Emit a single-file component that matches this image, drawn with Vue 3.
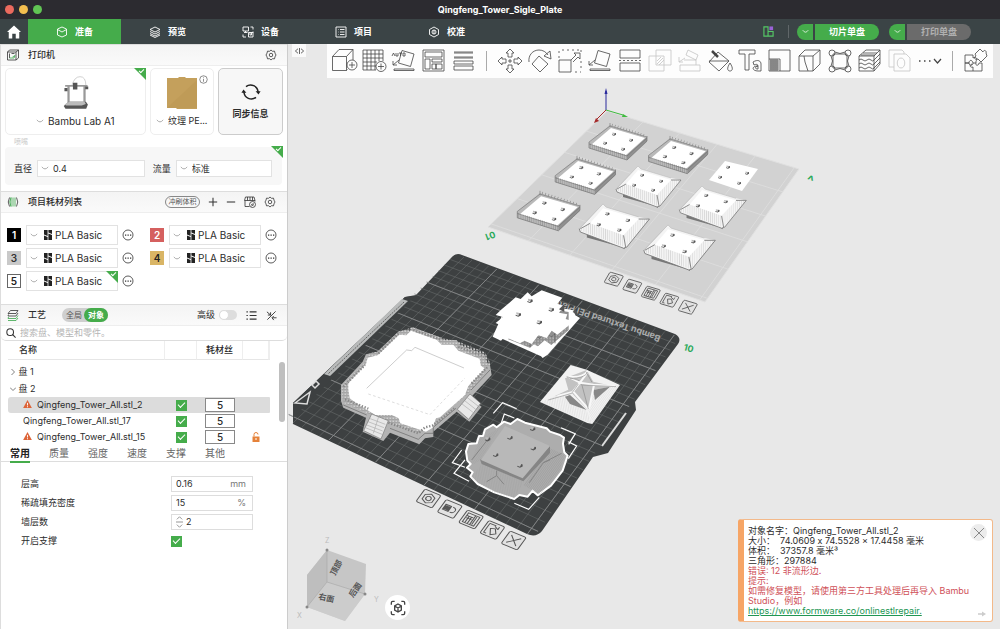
<script setup>
import { ref } from 'vue'

const circle = (x, y, r) => `M${x - r} ${y}a${r} ${r} 0 1 0 ${2 * r} 0a${r} ${r} 0 1 0 ${-2 * r} 0`

const gear = 'M12 2l3 2.6 4-.3 1 4L22 12l-2 3.700-1 4-4-.3-3 2.600-3-2.600-4 .3-1-4L2 12l2-3.700 1-4 4 .3z' + circle(12, 12, 3.5)

const navTabs = [
  { label: '准备', d: 'M12 2l9 4v12l-9 4-9-4V6zM3 7l9 5 9-5' },
  { label: '预览', d: 'M12 2l10 5-10 5L2 7zM2 11l10 5 10-5M2 15l10 5 10-5M2 18l10 5 10-5' },
  { label: '设备', d: 'M2 2h11v8H2zM7 10v3M4 13h7M17 2h5v5M22 11v3M2 17v5h6M13 13h9v9h-9zM16 13v5h3v-5' },
  { label: '项目', d: 'M2 2h20v20H2zM6 7h1M10 7h9M6 12h1M10 12h9M6 17h1M10 17h9' },
  { label: '校准', d: 'M12 2l9 5v10l-9 5-9-5V7z' + circle(12, 12, 4) + 'M12 8v8' },
]
const activeTab = ref(0)

const bed = 'M10 1.500L22 5l-3.500 12.500L6.500 14z'
const tools1 = [
  { label: '添加', d: 'M.5 7.500h14v14H.5zM.5 7.500L7 .5h14l-6.500 7M21 .5V11M14.500 21.500l1-1' + circle(20, 16, 5), plus: 'M17 16h6M20 13v6' },
  { label: '添加盘', d: 'M21 12V1H1v20h13M5 1v20M9 1v20M13 1v20M17 1v11M1 5h20M1 9h20M1 13h14M1 17h13' + circle(19, 17.500, 5), plus: 'M16 17.500h6M19 14.500v6' },
  { label: '自动朝向', d: bed + 'M2 20h20v1.500H2zM7 11l-6 5M1 12v4h4M0 7l1.500-3L3 7M4 4v3h2V4M7 4h3M8.500 4v3M11 4h2v3h-2z' },
  { label: '自动摆放', d: 'M1 1h21v21H1zM3 3h17v5H3zM3 10h5v10H3zM10 10h10v3H10zM10 15h4v5h-4zM14 15h6v5h-6z' },
  { label: '排列选项', d: 'M2 3h19M2 4h19M2 8h19M2 9h19M2 12h19v3H2zM2 17h19v4H2z' },
]
const tools2 = [
  { label: '移动', d: 'M12 0l4 4h-2v4h-4V4H8zM12 24l4-4h-2v-4h-4v4H8zM0 12l4-4v2h4v4H4v2zM24 12l-4-4v2h-4v4h4v2zM11 11h2v2h-2z' },
  { label: '旋转', d: 'M11 7l9 8-8 8-8-8zM1 13C0 6 5 1 11 1c4 0 7 2 9 5M22 2l1 8-7-3z' },
  { label: '缩放', d: 'M1 11h12v12H1zM13 11l5-5-2-2h6v6l-2-2-5 5M1 9V7M1 4V2M4 1h2M9 1h2M14 1h2M19 1h2M23 1v2M23 12v2M23 17v2M17 23h2M22 23h1' },
  { label: '选择底面', d: bed + 'M2 20h20v1.500H2zM7 11l-6 5M1 12v4h4' },
  { label: '切割', d: 'M2 1h20v8H2zM2 14h20v8H2zM1 11.500h2M5 11.500h2M9 11.500h2M13 11.500h2M17 11.500h2M21 11.500h2' },
  { label: '网格布尔', d: 'M1 7h15v15H1zM8 1h15v15H8zM9 15l6-6M9 12l4-4M11 16l5-5', faded: true },
  { label: '支撑绘制', d: 'M2 16h20v6H2zM6 11h12v5M10 1l10 5-2 5-10-5zM7 9l-6 4M1 8v5h4', faded: true },
  { label: '上色', d: 'M10 3l11 9-10 10L1 13zM1 12h20M22 14c4 6 2 8 0 8s-4-2 0-8z', bold: 'M4 2l6 6' },
  { label: '文字', d: 'M1 1h16v4h-6v16H7V5H1zM15 13c5-3 8-1 8 2v7h-3c-6 0-7-5 0-5 0-2-2-2-4-1zM20 17v3h-1c-2 0-2-3 1-3z' },
  { label: '测量', d: 'M1 1h21v21h-10V10H1zM1 10v12h11M2 12h9M2 14h9M2 16h9M2 18h9M2 20h9M3 10v12M5 10v12M7 10v12M9 10v12' },
  { label: '接缝', d: 'M1 7h14v15H1zM1 7l6-6h15l-7 6M22 1v14l-7 7M6 7l1 6 3 9' },
  { label: '变形', d: 'M5 5h14v14H5zM7 3Q12 6 17 3M7 21q5-3 10 0M3 7q3 5 0 10M21 7q-3 5 0 10' + circle(4, 4, 3) + circle(20, 4, 3) + circle(4, 20, 3) + circle(20, 20, 3) },
  { label: '可变层高', d: 'M1 7h15v15H1zM1 7l7-6h14l-6 6M22 1v14l-6 7M1 11q2-2 4 0t4 0 4 0 3 0l6-6M1 15q2-2 4 0t4 0 4 0 3 0l6-6M1 19q2-2 4 0t4 0 4 0 3 0l6-6M3 6h14M5 4h14' },
  { label: '浮雕', d: 'M1 1h13l2 2v2M1 1v17h5M6 5h12l4 4v13H6zM13 9c5 0 5 10 0 10s-5-10 0-10', faded: true },
]
const puzzle = 'M1 6h8v3c3-2 5 1 3 3v2h-3c-1-4-4-3-4 0H1zM1 14h4c0 3 4 3 4 0M1 14v8h8v-4c-3 1-4-2-1-3M9 22h9v-8h-3c0 3-4 3-3 0M11 5l5-5 3 3c1-3 4-1 3 1l1 3-6 6-3-3c-3 1-5-1-2-3z'

const filaments = [
  { n: 1, bg: '#000', fg: '#fff' },
  { n: 2, bg: '#d5605f', fg: '#fff' },
  { n: 3, bg: '#c9c9c9', fg: '#333' },
  { n: 4, bg: '#d9b565', fg: '#222' },
  { n: 5, bg: '#fff', fg: '#222', ring: true, checked: true },
]
const objects = [
  { name: 'Qingfeng_Tower_All.stl_2', warn: true, selected: true },
  { name: 'Qingfeng_Tower_All.stl_17' },
  { name: 'Qingfeng_Tower_All.stl_15', warn: true, lock: true },
]
const paramTabs = ['常用', '质量', '强度', '速度', '支撑', '其他']

// Projects plate millimetres onto the four screen corners of a plate.
function projector([a, b, c, d]) {
  const dx1 = b[0] - c[0], dx2 = d[0] - c[0], sx = a[0] - b[0] + c[0] - d[0]
  const dy1 = b[1] - c[1], dy2 = d[1] - c[1], sy = a[1] - b[1] + c[1] - d[1]
  const det = dx1 * dy2 - dx2 * dy1
  const g = (sx * dy2 - dx2 * sy) / det
  const h = (dx1 * sy - sx * dy1) / det
  return (u, v) => {
    const w = g * u + h * v + 1
    const x = ((b[0] - a[0] + g * b[0]) * u + (d[0] - a[0] + h * d[0]) * v + a[0]) / w
    const y = ((b[1] - a[1] + g * b[1]) * u + (d[1] - a[1] + h * d[1]) * v + a[1]) / w
    return `${x.toFixed(1)} ${y.toFixed(1)}`
  }
}
function grid(corners, step) {
  const p = projector(corners)
  let d = ''
  for (let mm = step; mm < 256; mm += step) {
    const t = mm / 256
    d += `M${p(t, 0)}L${p(t, 1)}M${p(0, t)}L${p(1, t)}`
  }
  return d
}
const darkPlate = [[456, 254], [680, 337], [534, 537], [284, 419]]
const lightPlate = [[607, 111], [799, 169], [705, 302], [488, 227]]
const darkFine = grid(darkPlate, 10)
const darkBold = grid(darkPlate, 50)
const lightBold = grid(lightPlate, 50)

const trays = [[0, 0, 1], [60, 13, 1.02], [-33, 33, 1.04], [-70, 68, 1.08]]
const roofs = [[0, 0, 1], [64, 20, 1.03], [-35, 38, 1.08], [30, 59, 1.1]]
const plateIcons = [
  'M10 3l6 3.500v7L10 17l-6-3.500v-7z' + circle(10, 10, 3),
  'M3 6h7v8H3zM4 7v6M5 7v6M6 7v6M7 7v6M8 7v6M9 7v6M12 6c6 0 6 8 0 8',
  'M3 3h14v14H3zM3 7h8M6 7v10M9 7v10M12 3v14M14 4v12M4 10h7',
  'M3 3h8M3 3v14h3M7 9l5-2 4 6-5 4zM10 4l5 3M15 3v4',
  'M4 4l12 12M16 4L4 16',
]
</script>

<template>
  <div class="app">
    <header class="titlebar">
      <div class="lights"><i class="red"></i><i class="yellow"></i><i class="green"></i></div>
      <h1>Qingfeng_Tower_Sigle_Plate</h1>
    </header>

    <nav class="nav">
      <button class="home" aria-label="主页">
        <svg viewBox="0 0 24 24" width="14" height="14"><path fill="#fff" d="M12 1l12 11h-3v11h-6v-8H9v8H3V12H0z" /></svg>
      </button>
      <button v-for="(t, i) in navTabs" :key="t.label" class="tab" :class="{ active: i === activeTab }" @click="activeTab = i">
        <svg viewBox="0 0 24 24" width="12" height="12" class="line"><path :d="t.d" stroke-width="1.8" /></svg>
        <span>{{ t.label }}</span>
      </button>
      <div class="nav-right">
        <svg viewBox="0 0 24 24" width="11" height="11" fill="none" stroke-width="2.500"><path stroke="#55c866" d="M2 2h9v20H2zM11 12h11v10H11z" /><path fill="#9a62d8" d="M14 1h8v8h-8z" /></svg>
        <i class="sep"></i>
        <div class="split">
          <button aria-label="切片选项"><svg viewBox="0 0 10 6" width="7" height="5"><path d="M1 1q4 6 8 0" fill="none" stroke="#fff" /></svg></button>
          <button class="main">切片单盘</button>
        </div>
        <div class="split">
          <button aria-label="打印选项"><svg viewBox="0 0 10 6" width="7" height="5"><path d="M1 1q4 6 8 0" fill="none" stroke="#fff" /></svg></button>
          <button class="main off">打印单盘</button>
        </div>
      </div>
    </nav>

    <div class="body">
      <aside class="side">
        <section class="head">
          <svg viewBox="0 0 24 24" width="12" height="12" class="hicon"><path d="M1 6h17v16H1zM1 6l4-4h18v16l-5 4M18 6l5-4M5 9v9M9 9h6" /><path stroke="#3aa64a" d="M5 18h9l2-5-5 3" /></svg>
          <h2>打印机</h2>
          <span class="grow"></span>
          <button aria-label="打印机设置"><svg viewBox="0 0 24 24" width="12" height="12" class="hicon"><path :d="gear" /></svg></button>
        </section>

        <div class="cards">
          <div class="card wide">
            <i class="corner"></i>
            <svg viewBox="0 0 78 100" width="28" height="34" fill="none">
              <path stroke="#bbb" stroke-width="2" d="M27 28Q34 2 51 2T68 28" />
              <path stroke="#888" stroke-width="6" d="M17 28v58M64 28v55" />
              <path stroke="#bcbcbc" stroke-width="3" d="M19 28v58M66 28v55" />
              <path stroke="#999" stroke-width="5" d="M7 29h66" />
              <path fill="#555" d="M30 20h13v20H30zM5 35h9v10H5zM66 31h9v8h-9z" />
              <path fill="#555" d="M3 88l15-12h50l6 8-5 12H8z" />
              <path fill="#bbb" d="M5 84l15-9h44l4 7-12 5H10z" />
            </svg>
            <label class="pick"><svg viewBox="0 0 10 6" width="8" height="5"><path d="M1 1q4 5 8 0" /></svg><select aria-label="打印机型号"><option>Bambu Lab A1</option></select></label>
          </div>
          <div class="card plate">
            <svg viewBox="0 0 30 33" width="30" height="33"><path fill="#c4a05c" d="M0 1h11l1-1h6l1 1h11v31H10l-1-1H0z" /><path fill="#b8944f" d="M0 31L30 3v28z" opacity=".4" /></svg>
            <svg class="info" viewBox="0 0 24 24" width="9" height="9"><circle cx="12" cy="12" r="10" /><path d="M12 10v8M12 5v2" /></svg>
            <label class="pick"><svg viewBox="0 0 10 6" width="8" height="5"><path d="M1 1q4 5 8 0" /></svg><select aria-label="打印板类型"><option>纹理 PE...</option></select></label>
          </div>
          <button class="card sync">
            <svg viewBox="0 0 24 24" width="20" height="20" fill="none" stroke="#222" stroke-width="1.800"><path d="M6 5.500A9 9 0 0 1 20.500 12M18 18.500A9 9 0 0 1 3.500 12" /><path fill="#222" stroke="none" d="M17.500 11h6l-2.500 4zM.5 13h6L3 9z" /></svg>
            <span>同步信息</span>
          </button>
        </div>

        <p class="faint">喷嘴</p>
        <div class="nozzle">
          <i class="corner"></i>
          <label for="dia">直径</label>
          <div class="box dia"><svg viewBox="0 0 10 6" width="8" height="5"><path d="M1 1q4 5 8 0" /></svg><select id="dia"><option>0.4</option></select></div>
          <label for="flow">流量</label>
          <div class="box flow"><svg viewBox="0 0 10 6" width="8" height="5"><path d="M1 1q4 5 8 0" /></svg><select id="flow"><option>标准</option></select></div>
        </div>

        <section class="head second">
          <svg viewBox="0 0 24 24" width="12" height="12" class="hicon"><path d="M5 3Q0 12 5 21M19 3q5 9 0 18" /><path stroke="#3aa64a" d="M8 3v18M12 3v18M16 3v18M8 3q-5 9 0 18" /></svg>
          <h2>项目耗材列表</h2>
          <span class="grow"></span>
          <button class="pill">冲刷体积</button>
          <button aria-label="添加耗材"><svg viewBox="0 0 24 24" width="10" height="10" class="hicon"><path stroke-width="2.500" d="M2 12h20M12 2v20" /></svg></button>
          <button aria-label="删除耗材"><svg viewBox="0 0 24 24" width="10" height="10" class="hicon"><path stroke-width="2.500" d="M2 12h20" /></svg></button>
          <button aria-label="同步耗材"><svg viewBox="0 0 24 24" width="12" height="12" class="hicon"><path d="M3 2h17l2 7H1zM7 2v7M12 2v7M17 2v7M2 9v12h9M22 9v2" /><circle cx="17" cy="17" r="6" /><path d="M14 18l5-3M15 20l5-3" /></svg></button>
          <button aria-label="耗材设置"><svg viewBox="0 0 24 24" width="12" height="12" class="hicon"><path :d="gear" /></svg></button>
        </section>

        <div class="filaments">
          <div v-for="f in filaments" :key="f.n" class="fil">
            <span class="chip" :class="{ ring: f.ring }" :style="{ background: f.bg, color: f.fg }">{{ f.n }}</span>
            <div class="box">
              <svg viewBox="0 0 10 6" width="8" height="5"><path d="M1 1q4 5 8 0" /></svg>
              <svg class="mark" viewBox="0 0 8 10" width="8" height="10"><path d="M0 0h3.600v6L0 4.500zM4.400 0H8v4L4.400 2.500zM0 5.500L3.600 7v3H0zM4.400 3.500L8 5v5H4.400z" /></svg>
              <select :aria-label="'耗材 ' + f.n"><option>PLA Basic</option></select>
              <i v-if="f.checked" class="corner"></i>
            </div>
            <button aria-label="更多"><svg viewBox="0 0 24 24" width="12" height="12" class="hicon"><circle cx="12" cy="12" r="10" /><path stroke-width="2.500" d="M6 12h2.500M11 12h2.500M16 12h2.500" /></svg></button>
          </div>
        </div>

        <section class="head">
          <svg viewBox="0 0 24 24" width="12" height="12" class="hicon"><path d="M7 3h15l-4 6H2zM22 8l-4 6H2l1-3" /><path stroke="#3aa64a" d="M22 13l-4 6H2l1-3M22 18l-4 5H2" /></svg>
          <h2>工艺</h2>
          <div class="scope"><button>全局</button><button class="on">对象</button></div>
          <span class="grow"></span>
          <label class="adv">高级<input type="checkbox" class="switch"></label>
          <button aria-label="列表"><svg viewBox="0 0 24 24" width="11" height="11" class="hicon"><path stroke-width="2.400" d="M1 4h3M8 4h15M1 12h3M8 12h15M1 20h3M8 20h15" /></svg></button>
          <button aria-label="对比"><svg viewBox="0 0 24 24" width="11" height="11" class="hicon"><path stroke-width="2" d="M3 21L21 3M2 4l8 7M10 5v6H4M23 17h-9M17 13l-4 4 4 5" /></svg></button>
        </section>

        <label class="search">
          <svg viewBox="0 0 24 24" width="10" height="10" class="hicon"><circle cx="10" cy="10" r="8" stroke-width="2.500" /><path stroke-width="2.500" d="M16 16l7 7" /></svg>
          <input type="search" placeholder="搜索盘、模型和零件。" aria-label="搜索">
        </label>

        <div class="list">
          <table>
            <colgroup><col><col class="c2"><col class="c3"><col class="c4"><col class="c5"></colgroup>
            <thead><tr><th class="name">名称</th><th></th><th>耗材丝</th><th></th><th></th></tr></thead>
            <tbody>
              <tr class="group first"><td colspan="5"><svg viewBox="0 0 8 8" width="6" height="6"><path d="M2 0l4 4-4 4" /></svg> 盘 1</td></tr>
              <tr class="group"><td colspan="5"><svg viewBox="0 0 8 8" width="6" height="6"><path d="M0 2l4 4 4-4" /></svg> 盘 2</td></tr>
              <tr v-for="o in objects" :key="o.name" class="obj" :class="{ sel: o.selected }">
                <td class="oname"><svg v-if="o.warn" viewBox="0 0 24 22" width="9" height="8"><path fill="#dd6438" d="M12 0l12 22H0z" /><path stroke="#fff" stroke-width="2.500" d="M12 8v7M12 17v3" /></svg>{{ o.name }}</td>
                <td class="mid"><input type="checkbox" checked class="check" :aria-label="o.name"></td>
                <td class="mid"><button class="num">5</button></td>
                <td class="mid lock"><svg v-if="o.lock" viewBox="0 0 16 20" width="8" height="10"><path fill="#e5823a" d="M1 9h14v11H1z" /><path fill="none" stroke="#e5823a" stroke-width="2" d="M4 9V5q0-4 4-4t4 4" /><path fill="#fff" d="M7 12h2v4H7z" /></svg></td>
                <td></td>
              </tr>
            </tbody>
          </table>
          <i class="scroll"></i>
        </div>

        <div class="ptabs">
          <button v-for="(t, i) in paramTabs" :key="t" :class="{ on: i === 0 }">{{ t }}</button>
        </div>
        <form class="params" @submit.prevent>
          <label for="p1">层高</label><div class="field"><input id="p1" value="0.16"><span>mm</span></div>
          <label for="p2">稀疏填充密度</label><div class="field"><input id="p2" value="15"><span>%</span></div>
          <label for="p3">墙层数</label><div class="field"><svg viewBox="0 0 8 16" width="7" height="14"><path d="M1 5l3-3 3 3M1 11l3 3 3-3M0 8h8" /></svg><input id="p3" value="2"></div>
          <label for="p4">开启支撑</label><input id="p4" type="checkbox" checked class="check">
        </form>
      </aside>

      <main class="view">
        <svg class="scene" viewBox="288 44 712 585" preserveAspectRatio="xMidYMid slice" aria-label="三维视图">
          <defs>
            <pattern id="ribs" width="2" height="4" patternUnits="userSpaceOnUse"><path d="M0 0v4" stroke="#888" stroke-width=".8" /></pattern>
            <pattern id="tiles" width="5" height="8" patternUnits="userSpaceOnUse" patternTransform="rotate(-8)"><path d="M0 0v8" stroke="#999" stroke-width="1.500" /></pattern>
            <pattern id="tiles2" width="5" height="8" patternUnits="userSpaceOnUse" patternTransform="rotate(35)"><path d="M0 0v8" stroke="#888" stroke-width="1.500" /></pattern>
            <pattern id="rail" width="9" height="9" patternUnits="userSpaceOnUse"><path d="M1 1h5v6H1zM0 8h9" stroke="#888" fill="#e2e2e2" stroke-width="1" /></pattern>
            <g id="peg"><path fill="#bbb" d="M-1.500-1.500l2.500.5v1.500l-2.500-.5z" /><path fill="#555" d="M-2 .3l2 .7L1-1l1 .3v1.500l-2 1-2-.8z" /></g>
          </defs>

          <!-- plate 1 -->
          <path fill="#d2d2d2" d="M607 111L799 169 705 302 488 227z" />
          <path :d="lightBold" fill="none" stroke="#dedede" stroke-width=".8" />
          <path d="M607 111L799 169 705 302 488 227z" fill="none" stroke="#e0e0e0" />
          <path d="M606 110V91" stroke="#2a2a9c" /><path d="M604.500 94l1.500-6 1.500 6z" fill="#2a2a9c" />
          <path d="M606 110l-9 9" stroke="#a52a2a" /><path d="M594 123l2-5 3 3z" fill="#a52a2a" />
          <path d="M606 110l17 5" stroke="#3fba3f" /><path d="M628 117l-5-3-1 3z" fill="#3fba3f" />

          <g v-for="(t, i) in trays" :key="'t' + i" :transform="`translate(${610 + t[0]} ${125 + t[1]}) scale(${t[2]})`">
            <path fill="#b9b9b9" d="M0 0L37 12v5L17 35l-38-12v-6z" />
            <path fill="#fff" d="M1 3l34 10-19 17-35-10z" />
            <path fill="url(#ribs)" d="M-21 18l38 12v5l-38-12z" />
            <path fill="#909090" d="M17 30l20-18v4L17 35z" />
            <path fill="none" stroke="#777" stroke-width=".7" d="M-21 17v6l38 12 20-19v-5M-21 19l38 12 20-18" />
            <path fill="none" stroke="#777" stroke-width=".6" d="M0-2v4M-21 17L0 1l37 11" />
            <path fill="none" stroke="#888" stroke-width="2.500" stroke-dasharray=".6 2.400" d="M2 0l34 11" />
            <use href="#peg" x="4" y="9" /><use href="#peg" x="21" y="15" /><use href="#peg" x="-5" y="18" /><use href="#peg" x="13" y="24" />
          </g>

          <path fill="#fff" d="M725 161l33 8-16 22-33-11z" />
          <use href="#peg" x="728" y="167" /><use href="#peg" x="747" y="173" /><use href="#peg" x="720" y="177" /><use href="#peg" x="739" y="183" />

          <g v-for="(r, i) in roofs" :key="'r' + i" :transform="`translate(${638 + r[0]} ${167 + r[1]}) scale(${r[2]})`">
            <path fill="#777" d="M-15 27L20 38v3l-3-2-32-9z" />
            <path fill="#f4f4f4" d="M0-1l3 3 30 9 10 2-21 26-3 1L-21 25l-1-2z" />
            <path fill="url(#ribs)" opacity=".45" d="M-21 23l9-7 31 11 1 12-40-15z" />
            <path fill="url(#ribs)" opacity=".3" d="M33 13l10 0-22 26-2-12z" />
            <path fill="none" stroke="#bbb" stroke-width=".6" d="M-22 22L0-1l3 3 30 9" />
            <path fill="none" stroke="#777" stroke-width=".8" d="M-22 22l1 3 40 15 3-1 21-26-10 0M19 28l2 11M-12 17l-9 5" />
            <path fill="#fff" d="M0 3l33 10-14 15-31-11z" />
            <use href="#peg" x="4" y="8" /><use href="#peg" x="23" y="14" /><use href="#peg" x="-4" y="18" /><use href="#peg" x="15" y="23" />
          </g>

          <g v-for="(d, i) in plateIcons" :key="'a' + i" :transform="`translate(${606 + i * 18.500} ${272 + i * 7}) matrix(.68 .2 -.3 .52 4 0)`" fill="none" stroke="#555" stroke-width="1.200">
            <rect width="20" height="20" rx="2" fill="#e2e2e2" /><path :d="d" />
          </g>

          <!-- plate 2 -->
          <path fill="#3d4041" d="M405 297l11-2 35-37q5-6 11-3L675 334q7 4 3 10l-43 58 1 8-28 43-15 4-51 74q-6 7-15 3L293 424v-21z" />
          <g fill="none"><path :d="darkFine" stroke="#686b6c" stroke-width=".6" /><path :d="darkBold" stroke="#8b8d8e" stroke-width=".8" /></g>
          <path fill="#3d4041" d="M405 297l10-1-122 122v-15z" />
          <path fill="#b9bbbb" d="M402 299l6 2-78 75-6-2z" /><path stroke="#666" stroke-dasharray="2 1" d="M404 302l-76 72" />
          <path fill="none" stroke="#ddd" stroke-width="1.500" d="M295 403l15-11-3 12zM316 381l3 3-4 4-3-3z" />
          <path stroke="#ddd" stroke-width="2" d="M626 413l-24 33" />
          <text class="bed" transform="translate(661 336) rotate(199)">Bambu Textured PEI Plate</text>

          <!-- platform -->
          <g transform="translate(290 240) scale(.3333)">
            <path fill="#b4b4b4" d="M153 435l65-70 10-22 34-8 63-60 20-5 15 2 8-10 82 30 10 8 40 0 10 15 75 30 3 20 12 10 5 30-65 70 35 25-37 45-38-30-70 60v16l-25 4-17 18-88-35-20 25-62-28 10-42-68-30-7-20z" />
            <path fill="url(#rail)" d="M153 440l65-65 20-35 24-5 63-60 43-13 82 30 60 15 75 30 17 35-62 85-152 123-88-30-140-62z" />
            <path fill="#fff" d="M175 448l0-18 53-57 5-20 30-7 64-62 22 2 14-14 77 27 15 15 35 0 15 18 64 24 3 20 12 10-49 52-10 27-75 67-12 3-10 28-20 12-77-25-5-15-20-10-50 0-57-35-20-15z" />
            <path fill="none" stroke="#999" stroke-width="1.500" d="M230 445l120-115 15 2 10-10 147 62" /><path fill="none" stroke="#ccc" stroke-width="2" stroke-dasharray="8 7" d="M235 462l185 62 105-110" />
            <path fill="none" stroke="#666" stroke-width="2" d="M160 495l70 30M300 565l85 33 20-18 25 0 0-18 68-57M543 450l57-60" />
            <path fill="none" stroke="#888" stroke-width="7" stroke-dasharray="4 5" d="M165 478l70 28M295 548l90 32 20-18 22-5 68-53M545 430l48-50M160 440l65-65M265 340l62-60M370 270l85 30M505 320l78 30" />
            <path fill="#e8e8e8" stroke="#777" stroke-width="2" d="M245 522l50 20-22 55-52-25zM540 462l32 28-36 48-34-30z" />
            <path stroke="#999" stroke-width="1.500" d="M238 535l48 18M234 545l48 18M230 555l48 18M226 563l50 20M532 473l32 25M524 482l33 26M515 491l34 26M266 530l-16 50" />
          </g>

          <!-- pagoda and small roof -->
          <g transform="translate(450 250) scale(.3333)">
            <path fill="#fff" d="M157 195L128 260l25 12 5-5 115 52 5 5 15-10 97-110-14-8-6-15-80-15z" />
            <path fill="#909090" d="M157 180l0 25 15 8 3 55 65 25 12-10 12 6 20-18 20 14 52-45 0-54-60-10-100-10z" />
            <path fill="url(#rail)" opacity=".5" d="M173 245l67 25 25-15 20-12 20 15 50-42v22l-52 46-20-15-20 20-12-6-12 10-65-25z" />
            <path fill="none" stroke="#555" stroke-width="2" d="M175 253l65 25 15-20 15 7 15-17 20 12 50-42M240 270v22M315 235v45" />
            <path fill="#fff" d="M155 178L197 142l15 5 21-20 12 12 30-18 62 22-15 18 20 7-15 20 25 5-5 14 12 4-2 15-35 28-17-12-15 22-25-8-20 26-22-10-13 8-60-25 5-28-18-8 22-18-22-6z" />
            <path fill="#555" d="M327 178l16-16v24zM368 186l9-10 8 20z" />
            <use href="#peg" transform="translate(240 152) scale(4)" /><use href="#peg" transform="translate(304 178) scale(4)" /><use href="#peg" transform="translate(205 193) scale(4)" /><use href="#peg" transform="translate(268 216) scale(4)" />

            <path fill="#f2f2f2" d="M362 345l48 14 100 46-83 117-15-3-142-63z" />
            <path fill="url(#tiles)" opacity=".5" d="M270 456l80-30 60 55 17 41z" /><path fill="url(#tiles2)" opacity=".4" d="M510 405l-75 10-20 65 12 40z" />
            <path fill="#c2c2c2" d="M345 385l65-25 20 35 60 14-55 10-22 60-50-52-50 12 42-20z" />
            <path fill="#888" d="M345 440l15-5 50 45-50-18zM430 420l50-10-45 40z" />
            <path fill="none" stroke="#f8f8f8" stroke-width="6" d="M390 398l-22 28-45 12M390 398l40 6 65 4M390 398l22-30M390 398l-35-18M370 425l45 52M432 405l-15 72M355 380q45 5 58-18" />
            <path fill="none" stroke="#777" stroke-width="1.500" d="M385 402l-20 28-70 20M395 402l20 75M398 405l100 5M388 392l-38-12M408 365l18 32M360 385q45 0 53-18" />
          </g>

          <!-- selected model -->
          <g transform="translate(380 400) scale(.3333)">
            <path fill="#adadad" stroke="#fff" stroke-width="6" stroke-linejoin="round" d="M258 155L265 132l25-2 7-22 12 0 6-20 25-14 10 8 22-17 20 7 20-15 23 11 65 17 10 10 30 10 12 8-3 18 4 26 10 10-15 45-35 45-40 29-15-14-15 18-25-5-15 12-60-20-50-25-22-23 7-12-17-14 11-11-10-10z" />
            <path fill="url(#tiles)" opacity=".8" d="M272 235l35-45 125 55-30 50-65-20z" /><path fill="url(#tiles2)" d="M510 145l45 20-15 45-60 75-50-30z" /><path fill="url(#tiles2)" opacity=".5" d="M268 200l30-85 60-30-55 95z" />
            <path fill="none" stroke="#858585" stroke-width="3" d="M320 245l30-18 22 26M350 227v-15M545 160l-55 28-42 60M490 188l20-8M330 110l-55 70" />
            <path fill="#858585" d="M300 178l5 14 125 52 80-85v-22l-80 88z" /><path fill="#b8b8b8" d="M375 78l135 60-82 97-125-55z" />
            <use href="#peg" transform="translate(390 112) scale(4)" /><use href="#peg" transform="translate(460 144) scale(4)" /><use href="#peg" transform="translate(347 164) scale(4)" /><use href="#peg" transform="translate(420 196) scale(4)" /><use href="#peg" transform="translate(323 117) scale(4)" /><use href="#peg" transform="translate(458 86) scale(4)" />
            <path fill="none" stroke="#fff" stroke-width="3.500" d="M340 40l28-32 42 18M363 72l10-30 30 12M543 83l43 18-20 32M565 125l25 13-25 38M245 150l-28 38 38 14M255 180l-33 40 45 24M403 310l43 18 32-36" />
          </g>

          <g v-for="(d, i) in plateIcons" :key="'b' + i" :transform="`translate(${422 + i * 21.300} ${489 + i * 10.500}) matrix(.8 .33 -.45 .62 3 0)`" fill="none" stroke="#555" stroke-width="1.200">
            <rect width="20" height="20" rx="2" fill="#e2e2e2" /><path :d="d" />
          </g>
          <g class="tag">
            <text transform="translate(494 231) rotate(160)">01</text>
            <text class="big" transform="translate(805 184) rotate(20)">^</text>
            <text transform="translate(683 350) rotate(15)">10</text>
          </g>

          <!-- orientation cube -->
          <g>
            <path fill="#c6c6c6" d="M327 550l39 14-1 30-20 27-38-14v-32z" />
            <path fill="#bcbcbc" d="M327 550v32l-20 25v-32z" opacity=".8" /><path fill="#cfcfcf" d="M327 582l38 12-20 27-38-14z" opacity=".7" />
            <path fill="none" stroke="#aaa" stroke-width=".7" d="M327 550v32l38 12M327 582l-20 25" />
            <g fill="#888"><circle cx="327" cy="550" r="1.500" /><circle cx="307" cy="607" r="1.500" /><circle cx="365" cy="594" r="1.500" /></g>
            <g class="cube"><text transform="translate(335 576) rotate(-62)">顶部</text><text transform="translate(318 599) rotate(12)">右面</text><text transform="translate(353 598) rotate(-55)">后面</text></g>
            <g class="axis"><text x="325" y="543">Z</text><text x="297" y="618">X</text><text x="374" y="602">Y</text></g>
          </g>
        </svg>

        <button class="collapse" aria-label="折叠侧栏"><svg viewBox="0 0 24 16" width="9" height="8"><path d="M8 2L1 8l7 6M16 2l7 6-7 6M12 0v16" /></svg></button>

        <div class="toolbar">
          <button v-for="t in tools1" :key="t.label" :aria-label="t.label"><svg viewBox="0 0 24 24" width="24" height="24"><path :d="t.d" /><path v-if="t.plus" fill="none" :d="t.plus" /></svg></button>
          <i></i>
          <button v-for="t in tools2" :key="t.label" :aria-label="t.label" :class="{ faded: t.faded }"><svg viewBox="0 0 24 24" width="24" height="24"><path :d="t.d" /><path v-if="t.bold" stroke-width="2.500" :d="t.bold" /></svg></button>
          <button aria-label="更多工具"><svg viewBox="0 0 24 24" width="24" height="24"><path stroke-width="1.500" d="M1 12h1.500M6 12h1.500M11 12h1.500" /><path stroke-width="1.200" d="M16 10l3.500 4 3.500-4" /></svg></button>
          <i></i>
          <button aria-label="装配视图"><svg viewBox="0 0 24 24" width="24" height="24"><path :d="puzzle" /></svg></button>
        </div>

        <button class="fit" aria-label="适应视图"><svg viewBox="0 0 24 24" width="16" height="16"><path d="M2 7V4q0-2 2-2h3M17 2h3q2 0 2 2v3M22 17v3q0 2-2 2h-3M7 22H4q-2 0-2-2v-3M12 6l5 3v6l-5 3-5-3V9zM7 9l5 3 5-3M12 12v6" /></svg></button>

        <div class="toast" role="alert">
          <p>对象名字：Qingfeng_Tower_All.stl_2</p>
          <p>大小：&nbsp; 74.0609 x 74.5528 x 17.4458 毫米</p>
          <p>体积：&nbsp; 37357.8 毫米³</p>
          <p>三角形：297884</p>
          <p class="err">错误: 12 非流形边.</p>
          <p class="err">提示:</p>
          <p class="err">如需修复模型，请使用第三方工具处理后再导入 Bambu<br>Studio，例如</p>
          <a href="https://www.formware.co/onlinestlrepair">https://www.formware.co/onlinestlrepair.</a>
          <button class="close" aria-label="关闭"><svg viewBox="0 0 12 12" width="12" height="12"><path d="M1 1l10 10M11 1L1 11" /></svg></button>
          <svg class="arrow" viewBox="0 0 10 6" width="8" height="6"><path fill="#ccc" d="M0 2h5V0l5 3-5 3V4H0z" /></svg>
        </div>
      </main>
    </div>
  </div>
</template>

<style>
html, body { height: 100%; background: #e8e8e8; }
body { margin: 0; overflow: hidden; }
</style>

<style scoped>
.app { height: 100vh; display: flex; flex-direction: column; font: 9px/14px Inter, "Noto Sans CJK SC", sans-serif; color: #2c2c2c; }
.app *, .app *::before, .app *::after { box-sizing: border-box; }
button, input, select { font: inherit; color: inherit; margin: 0; padding: 0; border: 0; background: none; outline: 0; }
button { display: flex; align-items: center; justify-content: center; flex: none; }
select { appearance: none; min-width: 0; }
svg { flex: none; display: block; }
h1, h2, p { margin: 0; }

.titlebar { flex: none; height: 19px; background: #2c2b30; display: grid; grid-template-columns: 1fr auto 1fr; align-items: center; }
.titlebar h1 { color: #fff; font-size: 9px; font-weight: 700; }
.lights { display: flex; gap: 5px; padding-left: 5px; }
.lights i { width: 9px; height: 9px; border-radius: 50%; }
.red { background: #ec6a5e; } .yellow { background: #f4bf4f; } .green { background: #61c554; }

.nav { flex: none; height: 25px; background: #3b4446; display: flex; color: #fff; }
.home { width: 28px; }
.tab { width: 93px; gap: 7px; font-weight: 600; font-size: 9px; }
.tab.active { background: #45ac4b; }
.line { fill: none; stroke: #fff; }
.nav-right { margin-left: auto; display: flex; align-items: center; gap: 10px; padding-right: 29px; }
.sep { width: 1px; height: 13px; background: #606769; margin: 0 -2px 0 4px; }
.split { display: flex; gap: 2px; }
.split button { height: 16px; width: 16px; background: #45ac4b; border-radius: 8px 0 0 8px; }
.split .main { width: 64px; border-radius: 0 8px 8px 0; font-weight: 600; }
.split .off { background: #6b6b6b; color: #b0b0b0; }

.body { flex: 1; min-height: 0; display: flex; }
.side { width: 288px; flex: none; background: #fff; border-right: 1px solid #ccc; border-left: 1px solid #ddd; display: flex; flex-direction: column; }
.head { height: 22px; flex: none; display: flex; align-items: center; gap: 9px; padding: 0 10px 0 6px; background: linear-gradient(#f4f4f4, #fafafa); border-top: 1px solid #ddd; border-bottom: 1px solid #eee; }
.head h2 { font-size: 9px; font-weight: 500; }
.grow { flex: 1; }
.hicon { fill: none; stroke: #333; stroke-width: 1.6; }
.cards { display: flex; gap: 4px; padding: 2px 4px 0; height: 69px; }
.card { position: relative; border: 1px solid #eee; border-radius: 5px; display: flex; flex-direction: column; align-items: center; justify-content: flex-end; gap: 4px; padding-bottom: 6px; }
.wide { flex: 1; } .plate { width: 64px; gap: 4px; } .sync { width: 65px; background: #f7f7f7; border-color: #ccc; justify-content: center; gap: 5px; padding: 0; font-weight: 600; }
.pick { display: flex; align-items: center; gap: 4px; font-size: 10px; }
.plate .pick { font-size: 9px; }
.pick path, .box > svg:first-child path { fill: none; stroke: #999; }
.info { position: absolute; right: 5px; top: 6px; fill: none; stroke: #444; stroke-width: 1.6; }
.corner { position: absolute; right: -1px; top: -1px; width: 12px; height: 12px; background: #45ac4b; clip-path: polygon(0 0, 100% 0, 100% 100%); }
.corner::after { content: ""; position: absolute; right: 2px; top: 1px; width: 5px; height: 3px; border: solid #fff; border-width: 0 0 1px 1px; transform: rotate(-45deg); }
.faint { color: #c8c8c8; font-size: 7px; line-height: 10px; padding: 2px 0 0 13px; height: 12px; }
.nozzle { position: relative; margin: 0 5px 0 4px; height: 38px; background: #f7f7f7; border-radius: 4px; display: flex; align-items: center; gap: 5px; padding: 5px 10px 0 9px; }
.box { position: relative; display: flex; align-items: center; gap: 4px; border: 1px solid #e2e2e2; background: #fff; padding-left: 3px; }
.box select { flex: 1; }
.nozzle .box { height: 17px; }
.dia { flex: 108; margin-right: 3px; } .flow { flex: 96; }
.second { margin-top: 6px; gap: 8px; padding-right: 11px; }
.second > .hicon { margin-right: 1px; }
.pill { height: 12px; width: 35px; border: 1px solid #888; border-radius: 6px; font-size: 7px; color: #555; }

.filaments { display: grid; grid-template-columns: 143px 1fr; row-gap: 3px; padding: 12px 0 13px 6px; }
.fil { display: flex; align-items: center; gap: 4px; height: 20px; }
.chip { width: 14px; height: 14px; line-height: 14px; text-align: center; font-weight: 600; font-size: 10px; margin-right: 1px; }
.chip.ring { box-shadow: inset 0 0 0 1px #666; }
.fil .box { width: 92px; height: 20px; font-size: 10px; }
.fil .box select { margin-left: -1px; }
.mark { fill: #222; margin-left: 2px; }
.scope { display: flex; background: #cfcfcf; border-radius: 7px; font-size: 8px; height: 14px; margin-left: 7px; }
.scope button { padding: 0 2px 0 4px; color: #555; }
.scope .on { background: #45ac4b; color: #fff; border-radius: 7px; padding: 0 4px; font-weight: 600; }
.adv { display: flex; align-items: center; gap: 4px; }
.switch { appearance: none; width: 18px; height: 10px; border-radius: 5px; background: #ddd; }
.switch::before { content: ""; display: block; width: 10px; height: 10px; border-radius: 50%; background: #fff; border: 1px solid #ddd; }

.search { flex: none; display: flex; align-items: center; gap: 4px; height: 15px; padding-left: 5px; border-bottom: 1px solid #ddd; border-radius: 0 0 5px 5px; }
.search input { flex: 1; font-size: 9px; appearance: none; }
.search input::placeholder { color: #b5b5b5; }
.list { position: relative; height: 104px; flex: none; overflow: hidden; padding: 0 17px 0 7px; }
table { width: 100%; border-collapse: separate; border-spacing: 0; table-layout: fixed; }
.c2 { width: 32px; } .c3 { width: 46px; } .c4 { width: 26px; } .c5 { width: 1px; }
th, td { padding: 0; font-weight: 500; }
th { height: 19px; border-bottom: 1px solid #e6e6e6; border-right: 1px solid #eee; }
th.name { text-align: left; padding-left: 11px; }
td { white-space: nowrap; line-height: 14px; font-weight: 400; }
.group td { height: 17px; }
.group.first td { height: 20px; padding-top: 3px; }
.group svg { display: inline-block; fill: none; stroke: #555; margin-left: 2px; }
.obj td { height: 16px; }
.oname { padding-left: 15px; }
.oname svg { display: inline-block; margin-right: 5px; }
.obj.sel td { background: #dcdcdc; }
.sel td:first-child { border-radius: 3px 0 0 3px; } .sel td:last-child { border-radius: 0 3px 3px 0; }
.check { appearance: none; width: 11px; height: 11px; background: #45ac4b; display: grid; place-items: center; }
.check::before { content: ""; width: 7px; height: 4px; border: solid #fff; border-width: 0 0 1px 1px; transform: translateY(-1px) rotate(-45deg); }
.mid > * { margin: 0 auto; }
.num { width: 30px; height: 14px; border: 1px solid #888; background: #fff; font-size: 10px; font-weight: 500; }
.scroll { position: absolute; right: 2px; top: 21px; width: 6px; height: 60px; border-radius: 3px; background: #bfbfbf; }
.ptabs { flex: none; height: 17px; display: flex; gap: 19px; padding-left: 9px; border-bottom: 1px solid #ddd; color: #666; }
.ptabs button { font-size: 10px; line-height: 14px; width: 20px; }
.ptabs .on { color: #222; font-weight: 700; box-shadow: 0 2px #45ac4b; }

.params { display: grid; grid-template-columns: 150px 82px; grid-auto-rows: 16px; row-gap: 3px; padding: 14px 0 0 20px; align-items: center; }
.field { display: flex; align-items: center; gap: 3px; height: 16px; border: 1px solid #ddd; padding: 0 6px 0 4px; }
.field input { flex: 1; min-width: 0; }
.field span { color: #777; }
.field path, .collapse path { fill: none; stroke: #888; }

.view { flex: 1; position: relative; min-width: 0; overflow: hidden; background: #e8e8e8; }
.scene { position: absolute; inset: 0; width: 100%; height: 100%; }
.bed { font: 700 9px Inter, sans-serif; fill: #a9abab; }
.tag { font: 700 9px Inter, sans-serif; fill: #2aa858; }
.tag .big { font-size: 14px; }
.cube { font: 700 8px "Noto Sans CJK SC", sans-serif; fill: #555; }
.axis { font: 7px Inter, sans-serif; fill: #bbb; }
.collapse { position: absolute; left: 4px; top: 0; width: 14px; height: 13px; background: #fafafa; }
.collapse path { stroke: #333; stroke-width: 2; }
.toolbar { position: relative; margin: 0 7px 0 39px; height: 34px; background: #fdfdfd; display: flex; align-items: center; padding-left: 2px; }
.toolbar button { width: 30px; height: 34px; }
.toolbar svg { fill: none; stroke: #444; stroke-width: .8; overflow: visible; }
.toolbar .faded { opacity: .3; }
.toolbar i { width: 1px; height: 20px; background: #aaa; margin: 0 8px 0 7px; }
.fit { position: absolute; left: 97px; bottom: 9px; width: 25px; height: 25px; border-radius: 50%; background: #fff; }
.fit svg { fill: none; stroke: #444; stroke-width: 2; }
.toast { position: absolute; right: 7px; bottom: 7px; width: 255px; background: #fff; border: 1px solid #f3b98a; border-left: 6px solid #f6a566; border-radius: 3px; padding: 6px 4px 5px; line-height: 10px; }
.toast p { white-space: nowrap; }
.err { color: #cf5058; }
.toast a { color: #219653; }
.close { position: absolute; right: 5px; top: 4px; width: 17px; height: 17px; border-radius: 50%; background: #ececec; }
.close path { stroke: #888; }
.arrow { position: absolute; right: 6px; bottom: 4px; }
</style>
